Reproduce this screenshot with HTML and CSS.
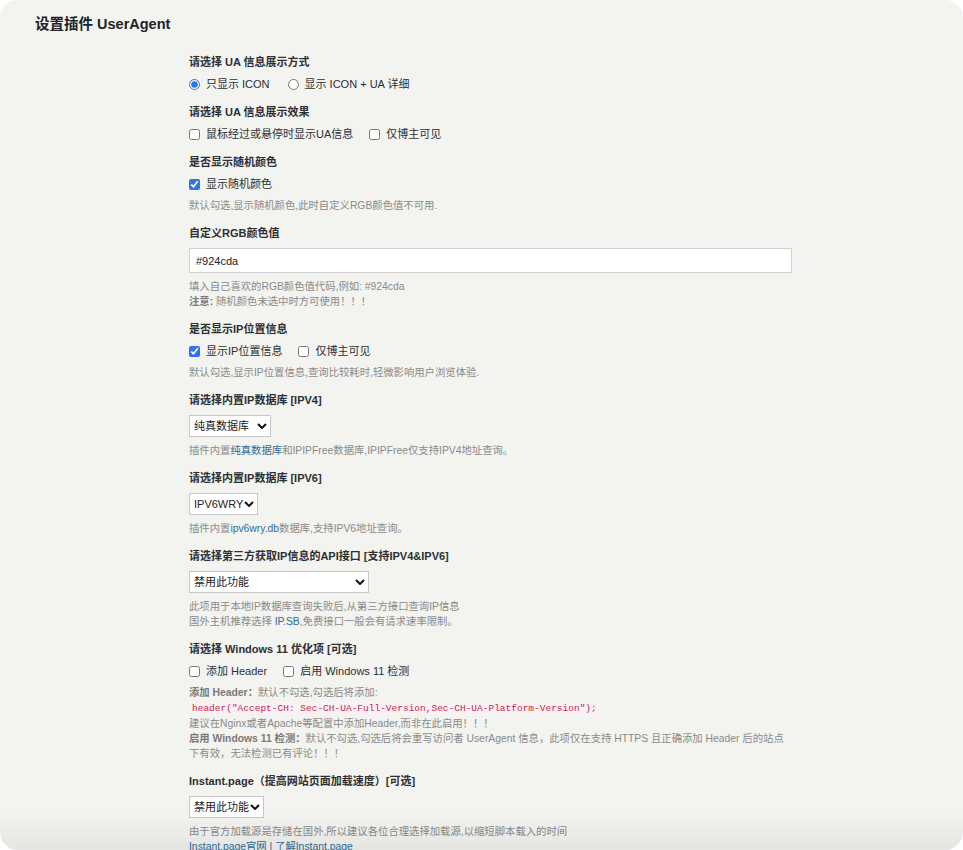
FILE: index.html
```html
<!DOCTYPE html>
<html lang="zh-CN">
<head>
    <meta charset="UTF-8">
    <meta name="viewport" content="width=device-width, initial-scale=1.0">
    <title>设置插件 UserAgent</title>
    <link rel="stylesheet" href="styles.css">
</head>
<body>
    <div class="panel">
        <h1 class="page-title">设置插件 UserAgent</h1>

        <form class="settings">
            <div class="field">
                <div class="field-title">请选择 UA 信息展示方式</div>
                <div class="options options-radio">
                    <label><input type="radio" name="ua_show" value="icon" checked>只显示 ICON</label>
                    <label><input type="radio" name="ua_show" value="detail">显示 ICON + UA 详细</label>
                </div>
            </div>

            <div class="field">
                <div class="field-title">请选择 UA 信息展示效果</div>
                <div class="options">
                    <label><input type="checkbox" name="ua_hover">鼠标经过或悬停时显示UA信息</label>
                    <label><input type="checkbox" name="ua_admin_only">仅博主可见</label>
                </div>
            </div>

            <div class="field">
                <div class="field-title">是否显示随机颜色</div>
                <div class="options">
                    <label><input type="checkbox" name="random_color" checked>显示随机颜色</label>
                </div>
                <p class="desc">默认勾选,显示随机颜色,此时自定义RGB颜色值不可用.</p>
            </div>

            <div class="field">
                <div class="field-title">自定义RGB颜色值</div>
                <input type="text" class="text-input" name="rgb_color" value="#924cda">
                <p class="desc">填入自己喜欢的RGB颜色值代码,例如: #924cda<br><strong>注意:</strong> 随机颜色未选中时方可使用！！！</p>
            </div>

            <div class="field">
                <div class="field-title">是否显示IP位置信息</div>
                <div class="options">
                    <label><input type="checkbox" name="show_ip" checked>显示IP位置信息</label>
                    <label><input type="checkbox" name="ip_admin_only">仅博主可见</label>
                </div>
                <p class="desc">默认勾选,显示IP位置信息,查询比较耗时,轻微影响用户浏览体验.</p>
            </div>

            <div class="field">
                <div class="field-title">请选择内置IP数据库 [IPV4]</div>
                <div class="control">
                    <span class="select-wrap select-ipv4">
                        <select name="ipv4_db">
                            <option selected>纯真数据库</option>
                            <option>IPIPFree</option>
                        </select>
                        <svg class="select-arrow" viewBox="0 0 10 6"><path d="M1 1 L5 5 L9 1" /></svg>
                    </span>
                </div>
                <p class="desc">插件内置<a href="#">纯真数据库</a>和IPIPFree数据库,IPIPFree仅支持IPV4地址查询。</p>
            </div>

            <div class="field">
                <div class="field-title">请选择内置IP数据库 [IPV6]</div>
                <div class="control">
                    <span class="select-wrap select-ipv6">
                        <select name="ipv6_db">
                            <option selected>IPV6WRY</option>
                        </select>
                        <svg class="select-arrow" viewBox="0 0 10 6"><path d="M1 1 L5 5 L9 1" /></svg>
                    </span>
                </div>
                <p class="desc">插件内置<a href="#">ipv6wry.db</a>数据库,支持IPV6地址查询。</p>
            </div>

            <div class="field">
                <div class="field-title">请选择第三方获取IP信息的API接口 [支持IPV4&amp;IPV6]</div>
                <div class="control">
                    <span class="select-wrap select-api">
                        <select name="ip_api">
                            <option selected>禁用此功能</option>
                            <option>IP.SB</option>
                        </select>
                        <svg class="select-arrow" viewBox="0 0 10 6"><path d="M1 1 L5 5 L9 1" /></svg>
                    </span>
                </div>
                <p class="desc">此项用于本地IP数据库查询失败后,从第三方接口查询IP信息<br>国外主机推荐选择 <a href="#">IP.SB</a>,免费接口一般会有请求速率限制。</p>
            </div>

            <div class="field">
                <div class="field-title">请选择 Windows 11 优化项 [可选]</div>
                <div class="options">
                    <label><input type="checkbox" name="win11_header">添加 Header</label>
                    <label><input type="checkbox" name="win11_detect">启用 Windows 11 检测</label>
                </div>
                <p class="desc"><strong>添加 Header：</strong>默认不勾选,勾选后将添加:<br><code>header("Accept-CH: Sec-CH-UA-Full-Version,Sec-CH-UA-Platform-Version");</code><br>建议在Nginx或者Apache等配置中添加Header,而非在此启用！！！<br><strong>启用 Windows 11 检测：</strong>默认不勾选,勾选后将会重写访问者 UserAgent 信息，此项仅在支持 HTTPS 且正确添加 Header 后的站点下有效，无法检测已有评论！！！</p>
            </div>

            <div class="field">
                <div class="field-title">Instant.page（提高网站页面加载速度）[可选]</div>
                <div class="control">
                    <span class="select-wrap select-instant">
                        <select name="instant_page">
                            <option selected>禁用此功能</option>
                            <option>官方源</option>
                        </select>
                        <svg class="select-arrow" viewBox="0 0 10 6"><path d="M1 1 L5 5 L9 1" /></svg>
                    </span>
                </div>
                <p class="desc">由于官方加载源是存储在国外,所以建议各位合理选择加载源,以缩短脚本载入的时间<br><span class="desc-links"><a href="#">Instant.page官网</a> | <a href="#">了解Instant.page</a></span></p>
            </div>
        </form>
    </div>
</body>
</html>
```

FILE: styles.css
```css
* {
    margin: 0;
    padding: 0;
    box-sizing: border-box;
}

body {
    font-family: "Liberation Sans", "Noto Sans CJK SC", sans-serif;
    background: #fff;
    color: #23282d;
}

.panel {
    position: relative;
    height: 850px;
    overflow: hidden;
    background: #f3f3ef;
    border-radius: 18px;
    padding: 14px 35px 0;
}

/* soft fade at the bottom of the window */
.panel::after {
    content: "";
    position: absolute;
    left: 0;
    right: 0;
    bottom: 0;
    height: 40px;
    background: linear-gradient(to bottom, rgba(0,0,0,0), rgba(0,0,0,0.06));
    pointer-events: none;
}

.page-title {
    font-size: 14.5px;
    line-height: 20px;
    font-weight: 700;
    color: #1d2327;
    margin-bottom: 20px;
}

.settings {
    width: 603px;
    margin-left: 154px;
}

.field {
    margin-bottom: 12px;
}

.field-title {
    font-size: 11px;
    line-height: 16px;
    font-weight: 700;
    color: #2c2f33;
    margin-bottom: 7px;
}

.options {
    display: flex;
    gap: 16px;
    height: 15px;
    font-size: 11px;
    line-height: 15px;
    color: #2c2f33;
}

.options-radio {
    gap: 18px;
}

.options label {
    display: inline-flex;
    align-items: center;
}

.options input {
    width: 11px;
    height: 11px;
    margin: 0 6px 0 0;
    accent-color: #2f74ea;
}

.text-input {
    display: block;
    width: 100%;
    height: 25px;
    border: 1px solid #d0d0d0;
    background: #fff;
    padding: 0 6px;
    font: inherit;
    font-size: 11px;
    color: #222;
}

.control {
    display: flex;
}

.select-wrap {
    position: relative;
    display: inline-block;
}

.select-wrap select {
    appearance: none;
    display: block;
    width: 100%;
    height: 22px;
    border: 1px solid #c8c8c8;
    border-radius: 0;
    background: #fff;
    padding: 0 0 0 4px;
    font: inherit;
    font-size: 11px;
    color: #222;
}

.select-arrow {
    position: absolute;
    right: 4px;
    top: 8px;
    width: 10px;
    height: 6px;
    fill: none;
    stroke: #111;
    stroke-width: 2;
    pointer-events: none;
}

.select-ipv4 { width: 82px; }
.select-ipv6 { width: 69px; }
.select-api { width: 180px; }
.select-instant { width: 75px; }

.desc {
    margin-top: 6px;
    font-size: 10.35px;
    line-height: 15px;
    color: #8a8a8a;
}

.desc strong {
    color: #7a7a7a;
}

.desc a {
    color: #2f6b9a;
    text-decoration: none;
}

.desc-links {
    color: #2f6b9a;
}

.desc code {
    font-family: "Liberation Mono", monospace;
    font-size: 9.5px;
    color: #c7254e;
    background: #f9f2f4;
    padding: 1px 3px;
}
```
